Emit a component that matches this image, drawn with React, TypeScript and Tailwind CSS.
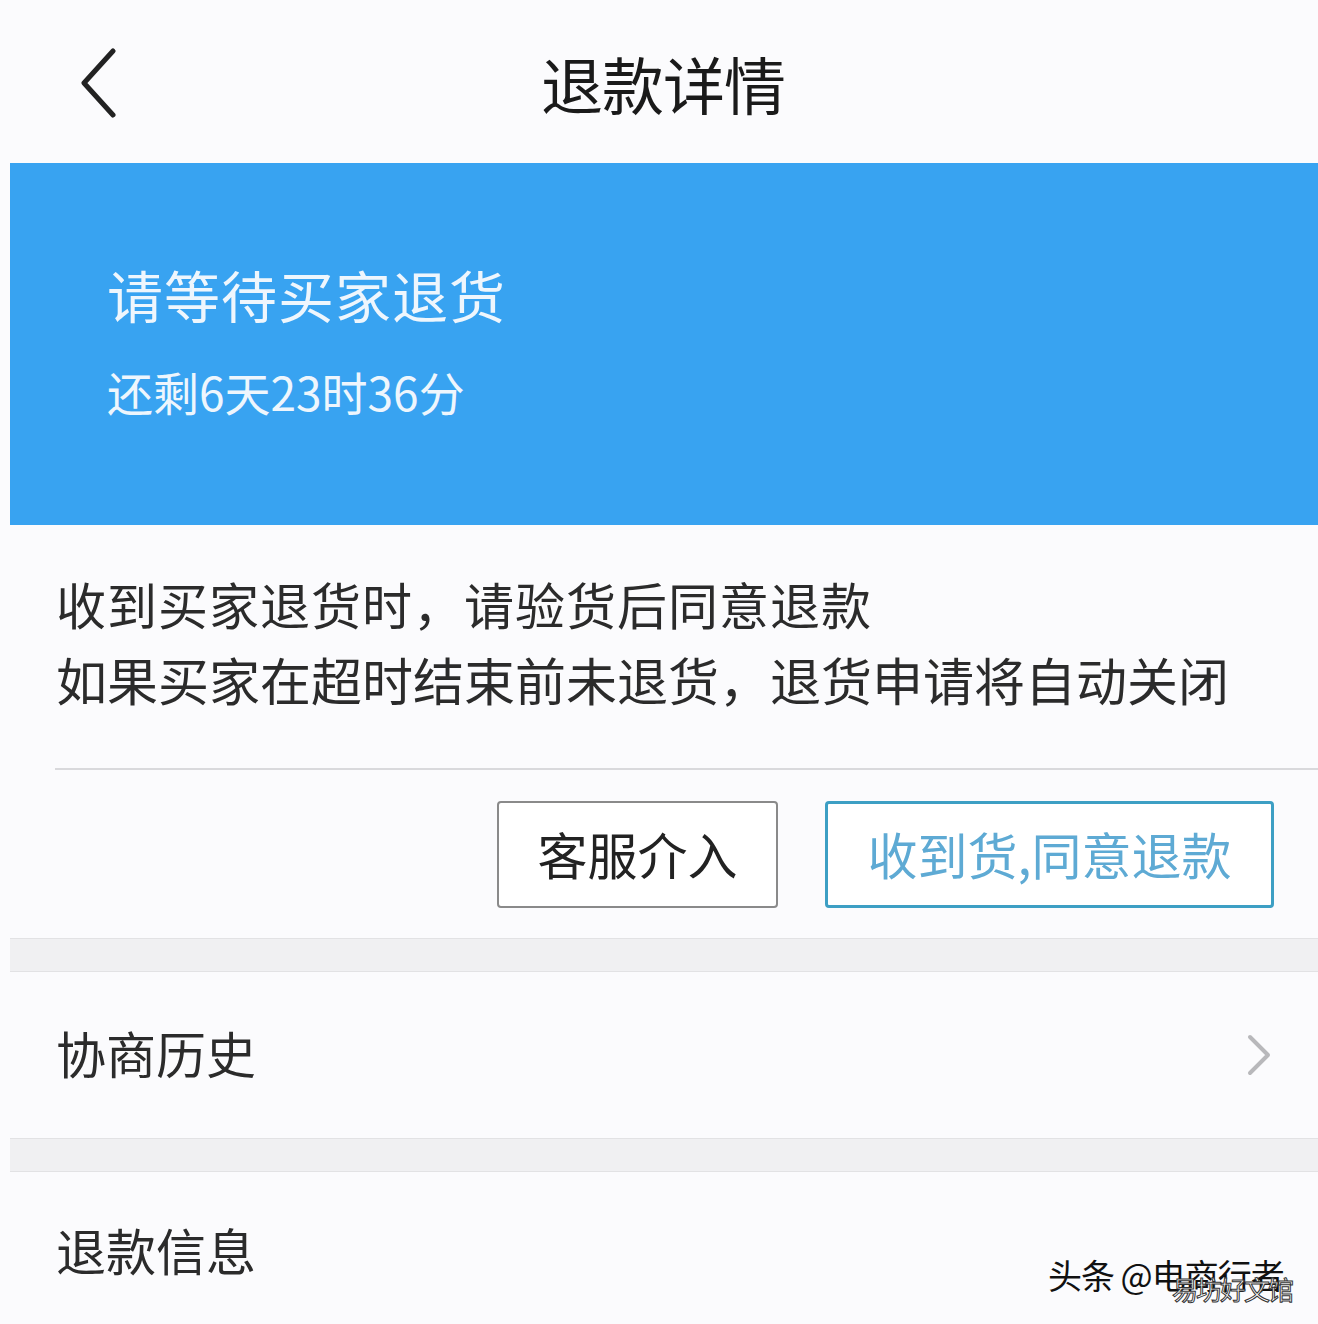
import React from "react";

const font = { fontFamily: '"Noto Sans CJK SC", "Noto Sans", sans-serif' };

export default function App() {
  return (
    <div className="w-[1318px] h-[1324px] overflow-hidden bg-[#fbfbfd] text-[#2b2b2b]" style={font}>
      {/* Header */}
      <div className="relative h-[163px] flex items-center justify-center">
        <svg className="absolute left-[78px] top-[48px]" width="40" height="70" viewBox="0 0 40 70">
          <path d="M35 3 L6 35 L35 67" fill="none" stroke="#222" strokeWidth="5" strokeLinecap="round" strokeLinejoin="round" />
        </svg>
        <span className="text-[62px] leading-none text-[#1a1a1a] pt-[2px] pl-[8px] tracking-[-1px]">退款详情</span>
      </div>
      {/* Blue banner */}
      <div className="ml-[10px] h-[362px] bg-[#38a3f1] flex flex-col justify-center pl-[97px] pb-[8px]">
        <div className="text-[56px] leading-none text-[#eef6fd] tracking-[1px]">请等待买家退货</div>
        <div className="mt-[46px] text-[46px] leading-none text-[#eef6fd]">还剩6天23时36分</div>
      </div>
      {/* Notice */}
      <div className="pl-[56px] pt-[40px] h-[243px] flex flex-col">
        <div className="text-[50px] leading-[76px] tracking-[1px]">收到买家退货时，请验货后同意退款</div>
        <div className="text-[51px] leading-[76px]">如果买家在超时结束前未退货，退货申请将自动关闭</div>
      </div>
      <div className="ml-[55px] h-[2px] bg-[#d9d9dc]" />
      {/* Buttons */}
      <div className="h-[168px] flex justify-end items-start pt-[31px] pr-[44px] gap-[47px]">
        <div className="w-[281px] h-[107px] border-2 border-[#8a8a8a] rounded-[4px] flex items-center justify-center bg-white">
          <span className="text-[50px] leading-none text-[#222] pb-[4px]">客服介入</span>
        </div>
        <div className="w-[449px] h-[107px] border-[3px] border-[#3d9fc4] rounded-[4px] flex items-center justify-center bg-white">
          <span className="text-[50px] leading-none text-[#5eaad4] pb-[4px]">收到货,同意退款</span>
        </div>
      </div>
      <div className="ml-[10px] h-[34px] bg-[#f0f0f2] border-t border-b border-[#e2e2e4]" />
      {/* 协商历史 */}
      <div className="h-[166px] flex items-center justify-between pl-[56px] pr-[46px]">
        <span className="text-[50px] leading-none pb-[6px]">协商历史</span>
        <svg width="26" height="44" viewBox="0 0 26 44">
          <path d="M4 4 L22 22 L4 40" fill="none" stroke="#b8b8bb" strokeWidth="4" strokeLinecap="round" strokeLinejoin="round" />
        </svg>
      </div>
      <div className="ml-[10px] h-[34px] bg-[#f0f0f2] border-t border-b border-[#e2e2e4]" />
      {/* 退款信息 */}
      <div className="relative h-[154px] pl-[56px] pt-[52px]">
        <span className="text-[50px] leading-none">退款信息</span>
        <div className="absolute left-[1048px] top-[86px] text-[34px] leading-none text-[#111] tracking-[-1px]">
          头条 @电商行者
        </div>
        <div className="absolute left-[1172px] top-[104px] text-[26px] leading-none text-white tracking-[-2px]" style={{ WebkitTextStroke: "1px #333" }}>
          易坊好文馆
        </div>
      </div>
    </div>
  );
}
